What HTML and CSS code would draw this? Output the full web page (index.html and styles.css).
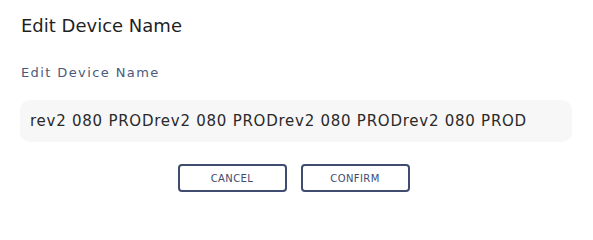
FILE: index.html
```html
<!DOCTYPE html>
<html>
<head>
<meta charset="utf-8">
<link rel="stylesheet" href="styles.css">
</head>
<body>
<div class="dialog">
  <h2 class="title">Edit Device Name</h2>
  <label class="label" for="name">Edit Device Name</label>
  <div class="field">
    <input id="name" class="input" type="text" value="rev2 080 PRODrev2 080 PRODrev2 080 PRODrev2 080 PROD">
  </div>
  <div class="actions">
    <button class="btn">CANCEL</button>
    <button class="btn">CONFIRM</button>
  </div>
</div>
</body>
</html>
```
FILE: styles.css
```css
html, body {
  margin: 0;
  padding: 0;
  background: #ffffff;
}
body {
  font-family: "DejaVu Sans", sans-serif;
}
.dialog {
  width: 593px;
  height: 209px;
  box-sizing: border-box;
  padding: 14px 21px 0 20px;
  display: flex;
  flex-direction: column;
}
.title {
  margin: 0;
  font-size: 18px;
  font-weight: 400;
  line-height: 24px;
  color: #1f1f1f;
  padding-left: 1px;
}
.label {
  margin-top: 27px;
  font-size: 13px;
  line-height: 16px;
  color: #4a5a7a;
  letter-spacing: 1.4px;
  padding-left: 1px;
}
.field {
  margin-top: 19px;
}
.input {
  width: 100%;
  box-sizing: border-box;
  height: 42px;
  border: none;
  border-radius: 10px;
  background: #f7f7f7;
  padding: 0 10px;
  font-family: "DejaVu Sans", sans-serif;
  font-size: 15px;
  letter-spacing: 0.75px;
  color: #2a2a2a;
  outline: none;
}
.actions {
  margin-top: 22px;
  display: flex;
  justify-content: center;
  gap: 14px;
  padding-right: 5px;
}
.btn {
  width: 109px;
  height: 28px;
  box-sizing: border-box;
  background: #ffffff;
  border: 2px solid #3f4b6f;
  border-radius: 4px;
  font-family: "DejaVu Sans", sans-serif;
  font-size: 10px;
  letter-spacing: 0.4px;
  color: #3f4b6f;
  padding: 0;
  cursor: pointer;
}
```
